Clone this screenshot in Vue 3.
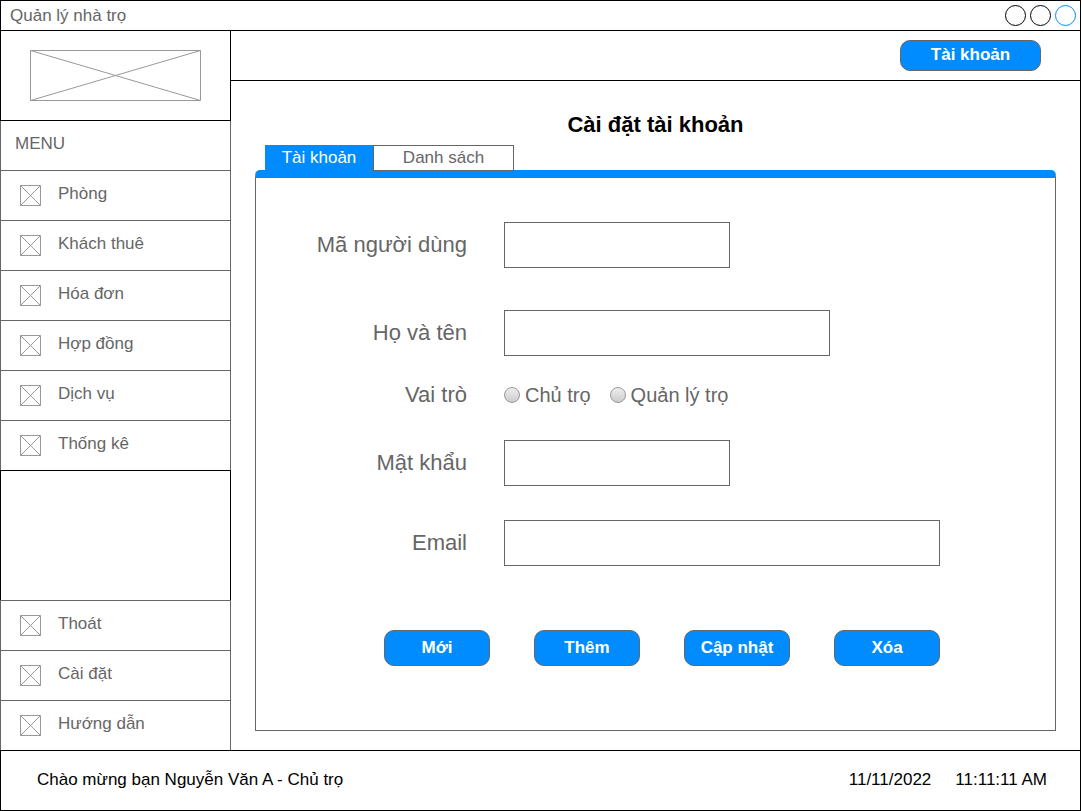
<script setup>
import { ref } from 'vue'

const mainMenu = ['Phòng', 'Khách thuê', 'Hóa đơn', 'Hợp đồng', 'Dịch vụ', 'Thống kê']
const systemMenu = ['Thoát', 'Cài đặt', 'Hướng dẫn']
const tabs = ['Tài khoản', 'Danh sách']
const actions = ['Mới', 'Thêm', 'Cập nhật', 'Xóa']
const roles = ['Chủ trọ', 'Quản lý trọ']

const activeTab = ref('Tài khoản')
const form = ref({ id: '', name: '', role: '', password: '', email: '' })
</script>

<template>
  <div class="window">
    <header class="titlebar">
      <span>Quản lý nhà trọ</span>
      <div class="controls">
        <button type="button" class="control" aria-label="Thu nhỏ"></button>
        <button type="button" class="control" aria-label="Phóng to"></button>
        <button type="button" class="control close" aria-label="Đóng"></button>
      </div>
    </header>

    <div class="body">
      <aside class="sidebar">
        <div class="logo">
          <svg width="171" height="51" viewBox="0 0 171 51" aria-hidden="true">
            <path d="M.5 .5h170v50H.5zM.5 .5l170 50M170.5 .5L.5 50.5" />
          </svg>
        </div>
        <nav class="menu">
          <div class="menu-title">MENU</div>
          <a v-for="item in mainMenu" :key="item" href="#" class="item">
            <svg width="21" height="21" viewBox="0 0 21 21" aria-hidden="true">
              <path d="M.5 .5h20v20H.5zM.5 .5l20 20M20.5 .5L.5 20.5" />
            </svg>
            <span>{{ item }}</span>
          </a>
        </nav>
        <div class="spacer"></div>
        <nav class="menu system">
          <a v-for="item in systemMenu" :key="item" href="#" class="item">
            <svg width="21" height="21" viewBox="0 0 21 21" aria-hidden="true">
              <path d="M.5 .5h20v20H.5zM.5 .5l20 20M20.5 .5L.5 20.5" />
            </svg>
            <span>{{ item }}</span>
          </a>
        </nav>
      </aside>

      <div class="content">
        <div class="toolbar">
          <button type="button" class="btn account">Tài khoản</button>
        </div>
        <main class="main">
          <h1>Cài đặt tài khoản</h1>
          <div class="tabs" role="tablist">
            <button
              v-for="tab in tabs"
              :key="tab"
              type="button"
              role="tab"
              class="tab"
              :class="{ active: tab === activeTab }"
              :aria-selected="tab === activeTab"
              @click="activeTab = tab"
            >{{ tab }}</button>
          </div>
          <form class="panel" @submit.prevent>
            <div class="fields">
              <label for="user-id">Mã người dùng</label>
              <input id="user-id" v-model="form.id" class="box short" type="text" />
              <label for="full-name">Họ và tên</label>
              <input id="full-name" v-model="form.name" class="box medium" type="text" />
              <span id="role-label" class="label">Vai trò</span>
              <div class="roles" role="radiogroup" aria-labelledby="role-label">
                <label v-for="role in roles" :key="role" class="role">
                  <input v-model="form.role" type="radio" name="role" :value="role" />
                  <span>{{ role }}</span>
                </label>
              </div>
              <label for="password">Mật khẩu</label>
              <input id="password" v-model="form.password" class="box short" type="password" />
              <label for="email">Email</label>
              <input id="email" v-model="form.email" class="box long" type="email" />
            </div>
            <div class="actions">
              <button v-for="action in actions" :key="action" type="button" class="btn">{{ action }}</button>
            </div>
          </form>
        </main>
      </div>
    </div>

    <footer class="statusbar">
      <span>Chào mừng bạn Nguyễn Văn A - Chủ trọ</span>
      <div class="clock">
        <span>11/11/2022</span>
        <span>11:11:11 AM</span>
      </div>
    </footer>
  </div>
</template>

<style>
body {
  background: #fff;
}
</style>

<style scoped>
.window,
.window * {
  box-sizing: border-box;
}
.window {
  display: flex;
  flex-direction: column;
  min-height: 100vh;
  margin-right: 1px;
  border: solid #000;
  border-width: 1px 1px 1px 0;
  font: 17px/20px "Liberation Sans", Arial, sans-serif;
  color: #666;
}
button,
input {
  font: inherit;
  margin: 0;
  padding: 0;
}
button {
  cursor: pointer;
}
.titlebar {
  display: flex;
  align-items: center;
  justify-content: space-between;
  height: 30px;
  padding: 0 4px 0 9px;
  border-left: 1px solid #000;
  border-bottom: 1px solid #000;
}
.controls {
  display: flex;
  gap: 4px;
}
.control {
  width: 21px;
  height: 21px;
  border: 1px solid #000;
  border-radius: 50%;
  background: #fff;
}
.control.close {
  border-color: #008cff;
}
.body {
  display: flex;
  flex: 1;
}
.sidebar {
  display: flex;
  flex-direction: column;
  flex: none;
  width: 231px;
}
.logo {
  padding: 19px 29px;
  border: solid #000;
  border-width: 0 1px 1px;
}
svg {
  display: block;
  flex: none;
  fill: none;
  stroke: #999;
}
.menu {
  border: solid #666;
  border-width: 0 1px;
}
.menu-title {
  height: 50px;
  padding: 13px 14px;
  border-bottom: 1px solid #666;
}
.item {
  display: flex;
  align-items: center;
  gap: 17px;
  height: 50px;
  padding-left: 19px;
  border-bottom: 1px solid #666;
  color: inherit;
  text-decoration: none;
}
.item span {
  padding-bottom: 4px;
}
.item:last-child {
  height: 49px;
  border-bottom: 0;
}
.spacer {
  flex: 1;
  border: solid #000;
  border-width: 1px 1px 0;
}
.system {
  border-top-width: 1px;
}
.content {
  display: flex;
  flex-direction: column;
  flex: 1;
  min-width: 0;
}
.toolbar {
  display: flex;
  justify-content: flex-end;
  height: 50px;
  padding: 9px 39px;
  border-bottom: 1px solid #000;
}
.btn {
  width: 106px;
  height: 36px;
  border: 1px solid #666;
  border-radius: 10px;
  background: #008cff;
  color: #fff;
  font-weight: 700;
}
.btn.account {
  width: 141px;
  height: 31px;
  padding-bottom: 2px;
}
.main {
  display: flex;
  flex-direction: column;
  flex: 1;
  padding: 31px 24px 19px;
}
h1 {
  margin: 0 0 7px;
  font-size: 22px;
  line-height: 26px;
  color: #000;
  text-align: center;
}
.tabs {
  display: flex;
  position: relative;
  padding-left: 10px;
  margin-bottom: -1px;
}
.tab {
  width: 141px;
  height: 26px;
  border: 1px solid #666;
  background: #fff;
  color: #666;
}
.tab.active {
  width: 108px;
  border-color: #008cff;
  background: #008cff;
  color: #fff;
}
.panel {
  flex: 1;
  padding-top: 23px;
  border: solid #666;
  border-width: 0 1px 1px;
  border-top: 8px solid #008cff;
  border-radius: 5px 5px 0 0;
}
.fields {
  display: grid;
  grid-template-columns: 211px 1fr;
  grid-template-rows: 88px 88px 36px 100px 60px;
  column-gap: 37px;
  align-items: center;
}
.fields > label,
.label {
  font-size: 22px;
  line-height: 26px;
  text-align: right;
}
.box {
  width: 100%;
  height: 46px;
  padding: 0 8px;
  border: 1px solid #666;
  background: #fff;
  color: #666;
}
.short {
  max-width: 226px;
}
.medium {
  max-width: 326px;
}
.long {
  max-width: 436px;
}
.roles {
  display: flex;
  gap: 19px;
}
.role {
  display: flex;
  align-items: center;
  gap: 5px;
  font-size: 20px;
  line-height: 24px;
}
.role input {
  appearance: none;
  width: 16px;
  height: 16px;
  border: 1px solid #999;
  border-radius: 50%;
  background: linear-gradient(#eee, #ccc);
}
.role input:checked {
  background: radial-gradient(#666 4px, #ddd 5px);
}
.actions {
  display: flex;
  gap: 44px;
  padding: 57px 0 24px 128px;
}
.statusbar {
  display: flex;
  align-items: center;
  justify-content: space-between;
  height: 60px;
  padding: 0 33px 2px 36px;
  border-left: 1px solid #000;
  border-top: 1px solid #000;
  color: #000;
}
.clock {
  display: flex;
  gap: 24px;
}
</style>
